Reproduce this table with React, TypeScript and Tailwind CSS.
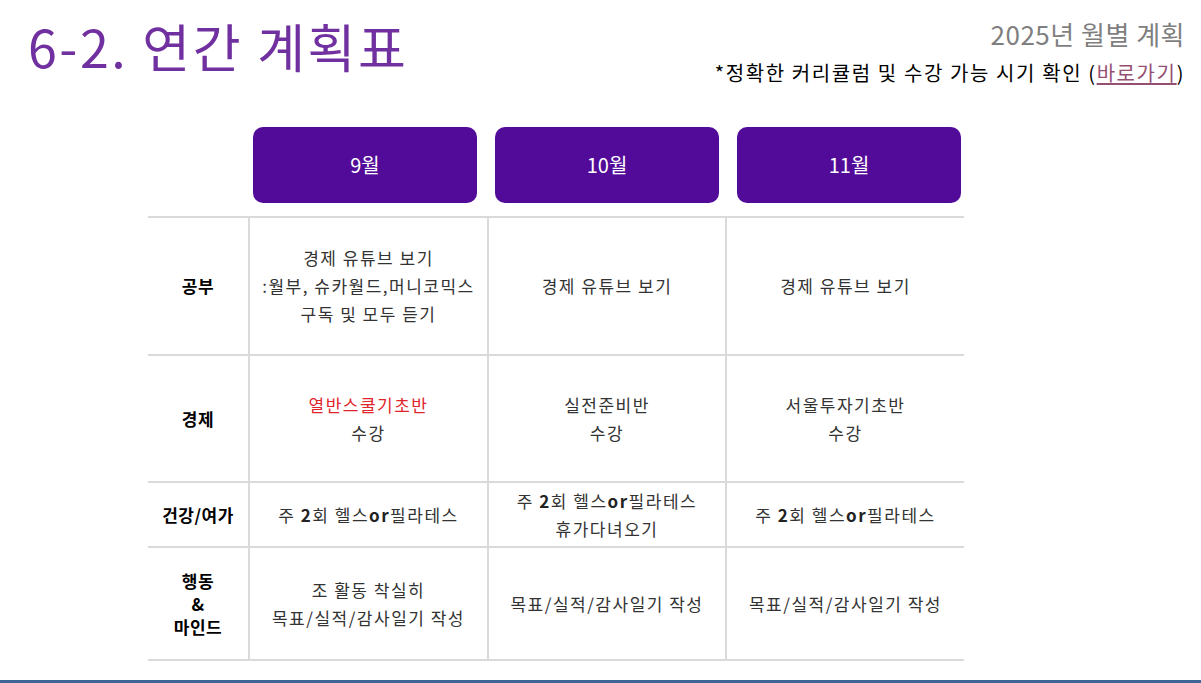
import React from 'react'

type Row = {
  label: React.ReactNode
  height: string
  cells: React.ReactNode[]
}

const months = ['9월', '10월', '11월']

const Health = () => (
  <>
    주 <b className="font-bold text-[#222]">2</b>회 헬스<b className="font-bold text-[#222]">or</b>필라테스
  </>
)

const rows: Row[] = [
  {
    label: '공부',
    height: 'h-[138px]',
    cells: [
      <>경제 유튜브 보기<br />:월부, 슈카월드,머니코믹스<br />구독 및 모두 듣기</>,
      <>경제 유튜브 보기</>,
      <>경제 유튜브 보기</>,
    ],
  },
  {
    label: '경제',
    height: 'h-[127px]',
    cells: [
      <><span className="text-[#e0242b]">열반스쿨기초반</span><br />수강</>,
      <>실전준비반<br />수강</>,
      <>서울투자기초반<br />수강</>,
    ],
  },
  {
    label: '건강/여가',
    height: 'h-[65px]',
    cells: [
      <Health />,
      <><Health /><br />휴가다녀오기</>,
      <Health />,
    ],
  },
  {
    label: <span className="block leading-[23px]">행동<br />&amp;<br />마인드</span>,
    height: 'h-[113px]',
    cells: [
      <>조 활동 착실히<br />목표/실적/감사일기 작성</>,
      <>목표/실적/감사일기 작성</>,
      <>목표/실적/감사일기 작성</>,
    ],
  },
]

const App: React.FC = () => {
  return (
    <div
      className="w-[1201px] h-[683px] bg-white flex flex-col overflow-hidden"
      style={{ fontFamily: '"Noto Sans CJK KR", "Noto Sans", sans-serif' }}
    >
      {/* header */}
      <div className="h-[110px] flex justify-between items-start">
        <h1 className="pl-[28px] pt-[10px] text-[52px] leading-[72px] text-[#7030a0] font-normal tracking-[2.5px]">
          6-2. 연간 계획표
        </h1>
        <div className="flex flex-col items-end pr-[16px] pt-[17px]">
          <div className="text-[26px] leading-[34px] text-[#7f7f7f] tracking-[0.5px]">2025년 월별 계획</div>
          <div className="text-[20px] leading-[28px] text-black mt-[8px] tracking-[1.6px]">
            *정확한 커리큘럼 및 수강 가능 시기 확인 (
            <a className="text-[#954f72] underline underline-offset-2">바로가기</a>)
          </div>
        </div>
      </div>

      {/* month headers */}
      <div className="ml-[253px] mt-[17px] flex gap-[18px]">
        {months.map((m) => (
          <div
            key={m}
            className="w-[224px] h-[76px] rounded-[10px] bg-[#520a99] text-white text-[20px] flex items-center justify-center"
          >
            {m}
          </div>
        ))}
      </div>

      {/* table */}
      <div className="ml-[148px] mt-[13px] w-[816px] border-t-2 border-[#dadada]">
        {rows.map((row, i) => (
          <div key={i} className={`grid grid-cols-[102px_239px_238px_237px] border-b-2 border-[#dadada] ${row.height}`}>
            <div className="flex items-center justify-center text-center text-[17px] font-bold text-black tracking-[0.5px] border-r-2 border-[#dadada]">
              {row.label}
            </div>
            {row.cells.map((c, j) => (
              <div
                key={j}
                className={`flex items-center justify-center text-center text-[17px] leading-[28px] tracking-[1.5px] text-[#333] ${j < 2 ? 'border-r-2 border-[#dadada]' : ''}`}
              >
                <div>{c}</div>
              </div>
            ))}
          </div>
        ))}
      </div>

      <div className="mt-auto h-[3px] bg-[#3f6597]" />
    </div>
  )
}

export default App
